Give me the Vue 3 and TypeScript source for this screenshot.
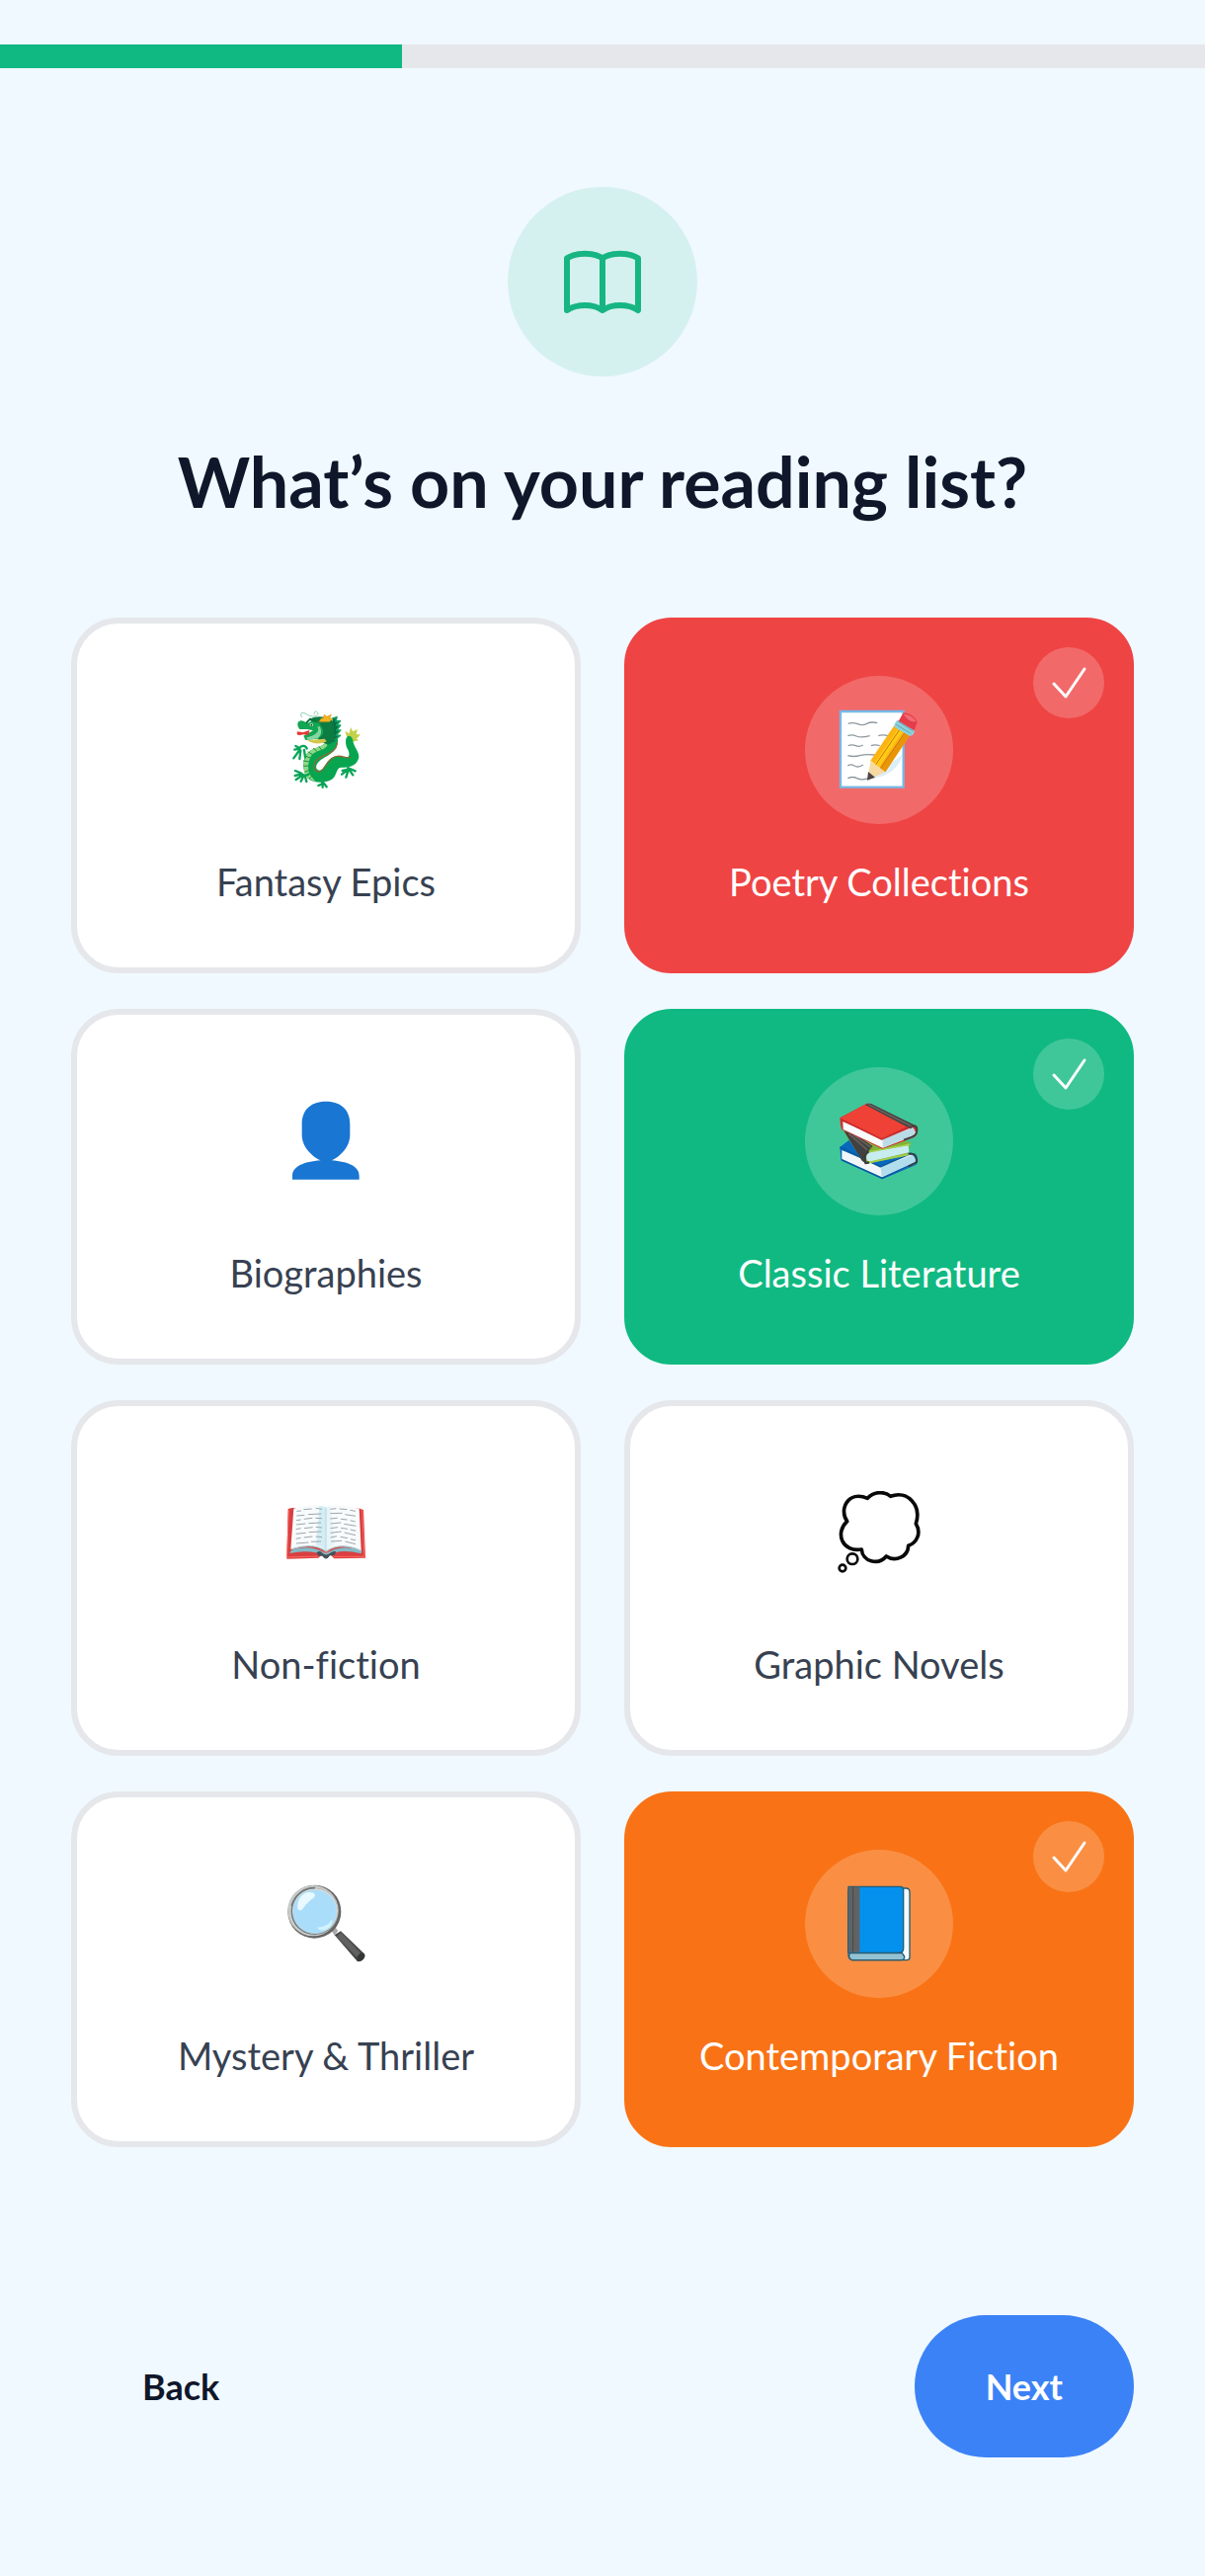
<script setup lang="ts">
import { ref } from 'vue'

type Art = 'dragon' | 'memo' | 'person' | 'books' | 'open' | 'thought' | 'lens' | 'bluebook'

interface Genre {
  name: string
  art: Art
  box: string
  tone: string
  selected: boolean
}

const genres = ref<Genre[]>([
  { name: 'Fantasy Epics', art: 'dragon', box: '144 111 252 252', tone: 'red', selected: false },
  { name: 'Poetry Collections', art: 'memo', box: '144 141 252 252', tone: 'red', selected: true },
  { name: 'Biographies', art: 'person', box: '54 69 252 252', tone: 'green', selected: false },
  { name: 'Classic Literature', art: 'books', box: '144 129 252 252', tone: 'green', selected: true },
  { name: 'Non-fiction', art: 'open', box: '54 57 252 252', tone: 'orange', selected: false },
  { name: 'Graphic Novels', art: 'thought', box: '84 87 252 252', tone: 'orange', selected: false },
  { name: 'Mystery & Thriller', art: 'lens', box: '54 75 252 252', tone: 'orange', selected: false },
  { name: 'Contemporary Fiction', art: 'bluebook', box: '144 135 252 252', tone: 'orange', selected: true },
])

const toggle = (genre: Genre): void => {
  genre.selected = !genre.selected
}
</script>

<template>
  <main class="page">
    <div class="progress" role="progressbar" aria-label="Progress" aria-valuemin="0" aria-valuemax="3" aria-valuenow="1">
      <div class="progress-fill"></div>
    </div>

    <header class="intro">
      <div class="badge">
        <svg class="art" viewBox="204 219 252 252" fill="none" stroke="#16b582" stroke-width="18" stroke-linejoin="round" stroke-linecap="round" aria-hidden="true">
          <path d="M330 274C302 256 252 256 222 274V432C252 412 302 412 330 432C358 412 408 412 438 432V274C408 256 358 256 330 274V432" />
        </svg>
      </div>
      <h1>What’s on your reading list?</h1>
    </header>

    <section class="grid" aria-label="Genres">
      <button
        v-for="genre in genres"
        :key="genre.name"
        type="button"
        class="card"
        :class="genre.selected ? ['selected', genre.tone] : []"
        :aria-pressed="genre.selected"
        @click="toggle(genre)"
      >
        <span v-if="genre.selected" class="tick">
          <svg viewBox="0 0 72 72" fill="none" stroke="#fff" stroke-width="3" stroke-linecap="round" stroke-linejoin="round" aria-hidden="true">
            <path d="M21 37L33 50L52 22" />
          </svg>
        </span>

        <span class="disc">
          <svg class="art" :viewBox="genre.box" aria-hidden="true">
            <g v-if="genre.art === 'dragon'" stroke-linecap="round" stroke-linejoin="round">
              <path d="M335 202L328 180L341 187L345 168L352 181L366 174L362 190L375 190L363 203L369 208L348 213Z" fill="#c2d14a" />
              <path d="M331 203C336 190 347 191 352 207C352 224 371 241 370 259C366 282 345 292 318 290C301 288 304 313 290 325C270 340 231 337 215 323C198 306 197 263 215 245C233 227 261 233 273 207L304 192C311 219 300 239 276 254C251 266 235 281 242 295C253 306 262 293 270 280C283 257 302 250 322 258C342 265 344 250 336 235C330 224 329 212 331 203Z" fill="#07a550" />
              <path d="M269 213C261 228 234 228 218 243C198 262 198 307 216 323L239 334L226 318C210 303 216 264 229 250C246 235 267 239 275 221Z" fill="#8bd986" />
              <path d="M216 243L229 251M207 255L222 261M202 270L217 272M203 286L217 285M208 303L222 297M220 323L230 314M232 232L243 241M249 227L256 236" stroke="#278b3d" stroke-width="3" />
              <path d="M304 216C301 250 260 249 240 270C224 291 242 308 255 301C268 293 275 261 304 256C322 254 331 263 343 259" fill="none" stroke="#8d6b36" stroke-width="4" />
              <path d="M222 143C251 127 282 139 302 158V208L276 221L248 208Z" fill="#0c7c43" />
              <path d="M289 142L303 137L300 150L313 149L302 162L314 162L302 177L314 177L301 192L313 193L299 205" fill="#086e43" stroke="#10a361" stroke-width="5" />
              <path d="M250 151L255 142L262 140L265 130L273 136L286 130L281 141L290 142L281 151Z" fill="#f2b51f" stroke="#d99018" stroke-width="2" />
              <path d="M190 174C181 163 182 150 194 148C206 147 210 159 219 154C231 144 251 151 255 165C269 182 259 196 244 203L208 207L202 194L231 178L213 174Z" fill="#13a653" />
              <path d="M244 167C253 180 239 192 211 199L216 207L246 201C258 190 257 177 251 165Z" fill="#83d7a0" />
              <path d="M220 177L200 184L184 181C178 191 186 195 202 190L217 192Z" fill="#e53935" />
              <path d="M212 208C230 219 252 221 272 211L266 203L248 205Z" fill="#d4c64a" />
              <path d="M222 143L211 154M222 143L240 151" stroke="#0a733b" stroke-width="6" />
              <ellipse cx="226" cy="161" rx="5" ry="4" fill="#fff" />
              <circle cx="226" cy="161" r="3" fill="#123d2c" />
              <path d="M197 137C187 123 202 120 215 131C233 141 255 131 242 121C235 118 232 126 236 129" fill="none" stroke="#86cfab" stroke-width="3" />
              <g fill="none" stroke="#0aa557" stroke-width="7">
                <path d="M212 233C208 222 195 222 190 231L178 225M190 233L175 236M190 237L172 262M193 238L190 264M204 237L207 259" />
                <path d="M218 310C211 317 200 315 195 308L177 300M193 311L176 315M196 316L179 327M201 318L194 332M207 318L211 333" />
                <path d="M338 280L337 296L320 300M337 297L318 311M338 298L331 320M341 297L352 313M343 294L359 301" />
                <path d="M260 325L258 340L247 345M260 334L260 350M262 336L272 349" />
              </g>
            </g>

            <g v-else-if="genre.art === 'memo'">
              <path d="M153 150H344V380H153Z" fill="#fff" stroke="#76b9e8" stroke-width="7" />
              <path d="M176 187Q190 182 205 188T233 187T265 185M175 224Q188 219 201 225T242 224M268 224Q282 219 300 225M176 254Q188 249 199 254T221 252M246 254Q257 249 272 254M175 284Q193 289 211 284T258 282M175 315Q184 308 195 315T222 312M299 312Q309 308 320 312M175 353Q190 346 203 353T239 353" fill="none" stroke="#8d999f" stroke-width="4" />
              <path d="M237 356L340 283Q330 328 279 347Z" fill="#dceef9" />
              <path d="M318 190L362 224L289 334L244 299Z" fill="#fcb414" />
              <path d="M330 199L343 209L269 320L255 308Z" fill="#ffca13" />
              <path d="M349 214L362 224L289 334L273 323Z" fill="#e99505" />
              <path d="M334 203L260 311M348 214L274 323" stroke="#c87918" stroke-width="3" />
              <path d="M244 300L289 334L236 358Z" fill="#f7d9a2" />
              <path d="M237 333L258 350L234 359Z" fill="#4b4745" />
              <path d="M326 176L378 208Q377 223 364 225L317 198Q315 184 326 176Z" fill="#8ed1dc" />
              <path d="M322 190L367 217M328 180L374 210" stroke="#5da8b5" stroke-width="3" />
              <path d="M344 154Q372 155 386 182L377 208L329 179Z" fill="#e53d4a" />
              <path d="M344 158Q369 158 383 181Q359 183 344 158Z" fill="#f16b75" />
            </g>

            <g v-else-if="genre.art === 'person'" fill="#1976d2">
              <path d="M180 74C218 74 253 92 253 144V176C253 214 219 244 197 253C249 257 281 272 281 300V311H78V300C78 272 112 257 164 253C142 244 107 214 107 176V144C107 92 142 74 180 74Z" />
            </g>

            <g v-else-if="genre.art === 'books'" stroke-linejoin="round">
              <path d="M151 273L178 252L286 303L384 298L383 326L280 370L154 311Z" fill="#0868bd" />
              <path d="M157 282L275 332L362 290Q389 301 379 325L278 367L157 309Z" fill="#f2f6f8" />
              <path d="M275 333L371 297Q385 306 378 323L278 362Z" fill="#b1ddec" />
              <path d="M151 273L274 332L367 292Q387 298 382 320L279 367L156 311" fill="none" stroke="#075ba2" stroke-width="5" />
              <path d="M356 292L377 295Q386 302 384 319L359 331" fill="none" stroke="#33434d" stroke-width="6" />
              <path d="M160 222L220 232L366 257L357 298L234 323L218 312Z" fill="#82b337" />
              <path d="M163 223L195 232L251 270L231 292L229 322L218 314Z" fill="#414141" />
              <path d="M178 232L234 281M191 235L246 274" stroke="#68605a" stroke-width="5" />
              <path d="M239 288L359 267L361 289L238 318Q224 303 239 288Z" fill="#c7edf1" />
              <path d="M236 288L365 264M236 320L359 295" stroke="#a6cf4b" stroke-width="5" />
              <path d="M239 286Q220 296 229 321L240 319" fill="none" stroke="#3b3e3c" stroke-width="7" />
              <path d="M151 184L236 139L381 208Q394 234 375 244L280 278L156 219L153 205Z" fill="#d32f2f" />
              <path d="M160 195L278 247L370 212Q388 227 374 239L281 275L161 219Z" fill="#f8fafb" />
              <path d="M281 249L373 214Q384 228 371 239L281 275Z" fill="#b9dce7" />
              <path d="M152 185L227 143L361 207L278 247Z" fill="#f04136" />
              <path d="M227 144L245 140L382 208L362 215Z" fill="#4b4746" />
              <path d="M237 143L370 210" stroke="#77706b" stroke-width="3" />
              <path d="M363 215Q383 201 385 218Q387 235 370 242L345 251" fill="none" stroke="#424242" stroke-width="6" />
              <path d="M154 188L278 249L363 213" fill="none" stroke="#c82c2c" stroke-width="5" />
            </g>

            <g v-else-if="genre.art === 'open'">
              <path d="M65 111L78 108L282 110L294 114L300 260L205 262L188 245H173L157 260L61 263Z" fill="#d93f40" />
              <path d="M67 115L62 258L157 255L173 240H190L204 256L297 256L290 114" fill="none" stroke="#ff6861" stroke-width="3" />
              <path d="M75 236Q136 218 180 247Q225 216 289 238L287 247Q218 229 181 257Q139 232 70 246Z" fill="#82bac6" />
              <path d="M82 110Q145 91 180 107Q221 91 281 112L287 238Q222 210 180 239Q137 213 73 234Z" fill="#f8fbfc" />
              <path d="M160 101L180 106L181 238Q165 222 150 221Z" fill="#d2edf4" />
              <path d="M180 106L193 101L207 219Q192 225 181 236Z" fill="#e7f5f8" />
              <path d="M180 108V237" stroke="#b4d7df" stroke-width="3" />
              <path d="M78 233Q140 212 181 240Q223 211 284 237" fill="none" stroke="#aacbd1" stroke-width="4" />
              <path d="M91 118L105 117M112 113L137 111M149 109L168 112M91 132L115 130M126 128L166 126M90 146L104 144M113 142L139 139M148 139L168 140M90 159L118 156M127 155L165 153M89 173L104 170M114 170L140 167M149 166L168 168M89 187L119 184M128 182L166 180M89 202L104 199M113 198L139 195M149 195L168 197M90 216L127 213M135 211L165 210M193 112L211 110M221 111L244 113M253 115L270 118M193 125L230 124M238 128L270 133M193 141L215 139M225 142L245 144M254 146L269 150M194 156L226 153M235 157L271 163M194 170L216 167M225 169L246 172M254 174L271 178M194 184L227 180M236 183L270 191M194 198L213 194M224 196L246 200M255 203L270 206M195 210L228 208M238 210L270 218" stroke="#9da6ad" stroke-width="3" />
              <path d="M159 240Q165 239 171 247Q181 254 192 246Q201 238 211 241L205 253H192Q181 271 169 254H157L151 243Z" fill="#455259" />
            </g>

            <g v-else-if="genre.art === 'thought'" fill="none" stroke="#090909" stroke-width="11" stroke-linejoin="round">
              <path d="M113 179C87 143 116 84 175 109C193 89 224 86 245 103C296 84 340 129 322 186C340 216 323 245 299 253C298 286 260 304 232 285C207 315 159 300 157 264C98 274 75 214 113 179Z" />
              <circle cx="129" cy="293" r="16" stroke-width="8" />
              <circle cx="99" cy="321" r="10" stroke-width="8" />
            </g>

            <g v-else-if="genre.art === 'lens'">
              <path d="M206 235L225 223L298 293Q297 311 276 316Z" fill="#474747" />
              <path d="M212 239L226 227L286 291L280 308Z" fill="#616161" />
              <ellipse cx="286" cy="302" rx="10" ry="14" transform="rotate(42 286 302)" fill="#343638" />
              <path d="M194 218L207 210L217 222L206 236Z" fill="#aaa" />
              <circle cx="145" cy="164" r="81" fill="#656565" />
              <circle cx="141" cy="161" r="77" fill="#c7cbca" />
              <circle cx="145" cy="163" r="71" fill="#747b7c" />
              <circle cx="147" cy="162" r="69" fill="#d5dada" />
              <circle cx="146" cy="164" r="66" fill="#aaddfa" />
              <path d="M94 155C91 120 115 98 143 107C156 119 132 126 125 137C113 145 106 171 94 155Z" fill="#e8f9ff" />
              <path d="M154 211Q184 213 199 186Q202 212 175 220Q157 223 154 211Z" fill="#d1f3ff" />
              <path d="M76 147A70 70 0 0 1 147 92" fill="none" stroke="#737a7b" stroke-width="5" />
            </g>

            <g v-else stroke="#275b72" stroke-width="4" stroke-linejoin="round">
              <path d="M190 153H352Q363 153 363 165V363Q363 371 354 371H188Q179 368 177 358V158Z" fill="#f2fbfd" />
              <path d="M181 350H340L347 360Q348 370 337 371H188Q174 366 181 350Z" fill="#93c2d3" />
              <path d="M177 148H335Q344 148 344 157V337Q344 349 330 349H180Q176 349 176 344Z" fill="#0491ed" />
              <path d="M178 149H211V347H178Z" fill="#626262" stroke="none" />
              <path d="M191 148V346" stroke="#454b4e" stroke-width="3" />
            </g>
          </svg>
        </span>
        <span class="label">{{ genre.name }}</span>
      </button>
    </section>

    <footer class="actions">
      <button type="button" class="action">Back</button>
      <button type="button" class="action next">Next</button>
    </footer>
  </main>
</template>

<style>
body {
  margin: 0;
  background: #f0f9ff;
}
</style>

<style scoped>
.page {
  box-sizing: border-box;
  min-height: 100vh;
  padding: 45px 0 120px;
  background: #f0f9ff;
  color: #0f172a;
  font-family: Lato, "Liberation Sans", sans-serif;
  font-variant-ligatures: none;
}

.progress {
  height: 24px;
  background: #e5e7eb;
}

.progress-fill {
  width: calc(100% / 3);
  height: 100%;
  background: #10b981;
}

.intro {
  display: flex;
  flex-direction: column;
  align-items: center;
  gap: 52px;
  padding: 120px 72px 84px;
}

.badge {
  display: flex;
  align-items: center;
  justify-content: center;
  width: 192px;
  height: 192px;
  border-radius: 50%;
  background: #d5f1ef;
}

.art {
  display: block;
  width: 84px;
  height: 84px;
}

h1 {
  margin: 0;
  font-size: 70px;
  font-weight: 700;
  line-height: 108px;
  text-align: center;
}

.grid {
  display: grid;
  grid-template-columns: 1fr 1fr;
  gap: 36px 44px;
  padding: 0 72px;
}

.card {
  position: relative;
  display: flex;
  flex-direction: column;
  align-items: center;
  gap: 24px;
  padding: 53px 12px;
  border: 6px solid #e5e7eb;
  border-radius: 48px;
  background: #fff;
  color: #374151;
  font: inherit;
  font-variant-ligatures: none;
  cursor: pointer;
}

.selected {
  color: #fff;
}

.red {
  border-color: #ef4444;
  background: #ef4444;
}

.green {
  border-color: #10b981;
  background: #10b981;
}

.orange {
  border-color: #f97316;
  background: #f97316;
}

.disc {
  display: flex;
  align-items: center;
  justify-content: center;
  width: 150px;
  height: 150px;
  border-radius: 50%;
}

.selected .disc,
.tick {
  background: rgba(255, 255, 255, 0.2);
}

.tick {
  position: absolute;
  top: 24px;
  right: 24px;
  width: 72px;
  height: 72px;
  border-radius: 50%;
}

.tick svg {
  display: block;
}

.label {
  font-size: 38px;
  line-height: 68px;
}

.actions {
  display: flex;
  justify-content: space-between;
  padding: 170px 72px 0;
}

.action {
  height: 144px;
  padding: 0 72px;
  border: 0;
  border-radius: 72px;
  background: transparent;
  color: #0f172a;
  font: inherit;
  font-size: 36px;
  font-weight: 700;
  cursor: pointer;
}

.next {
  background: #3b82f6;
  color: #fff;
}
</style>
